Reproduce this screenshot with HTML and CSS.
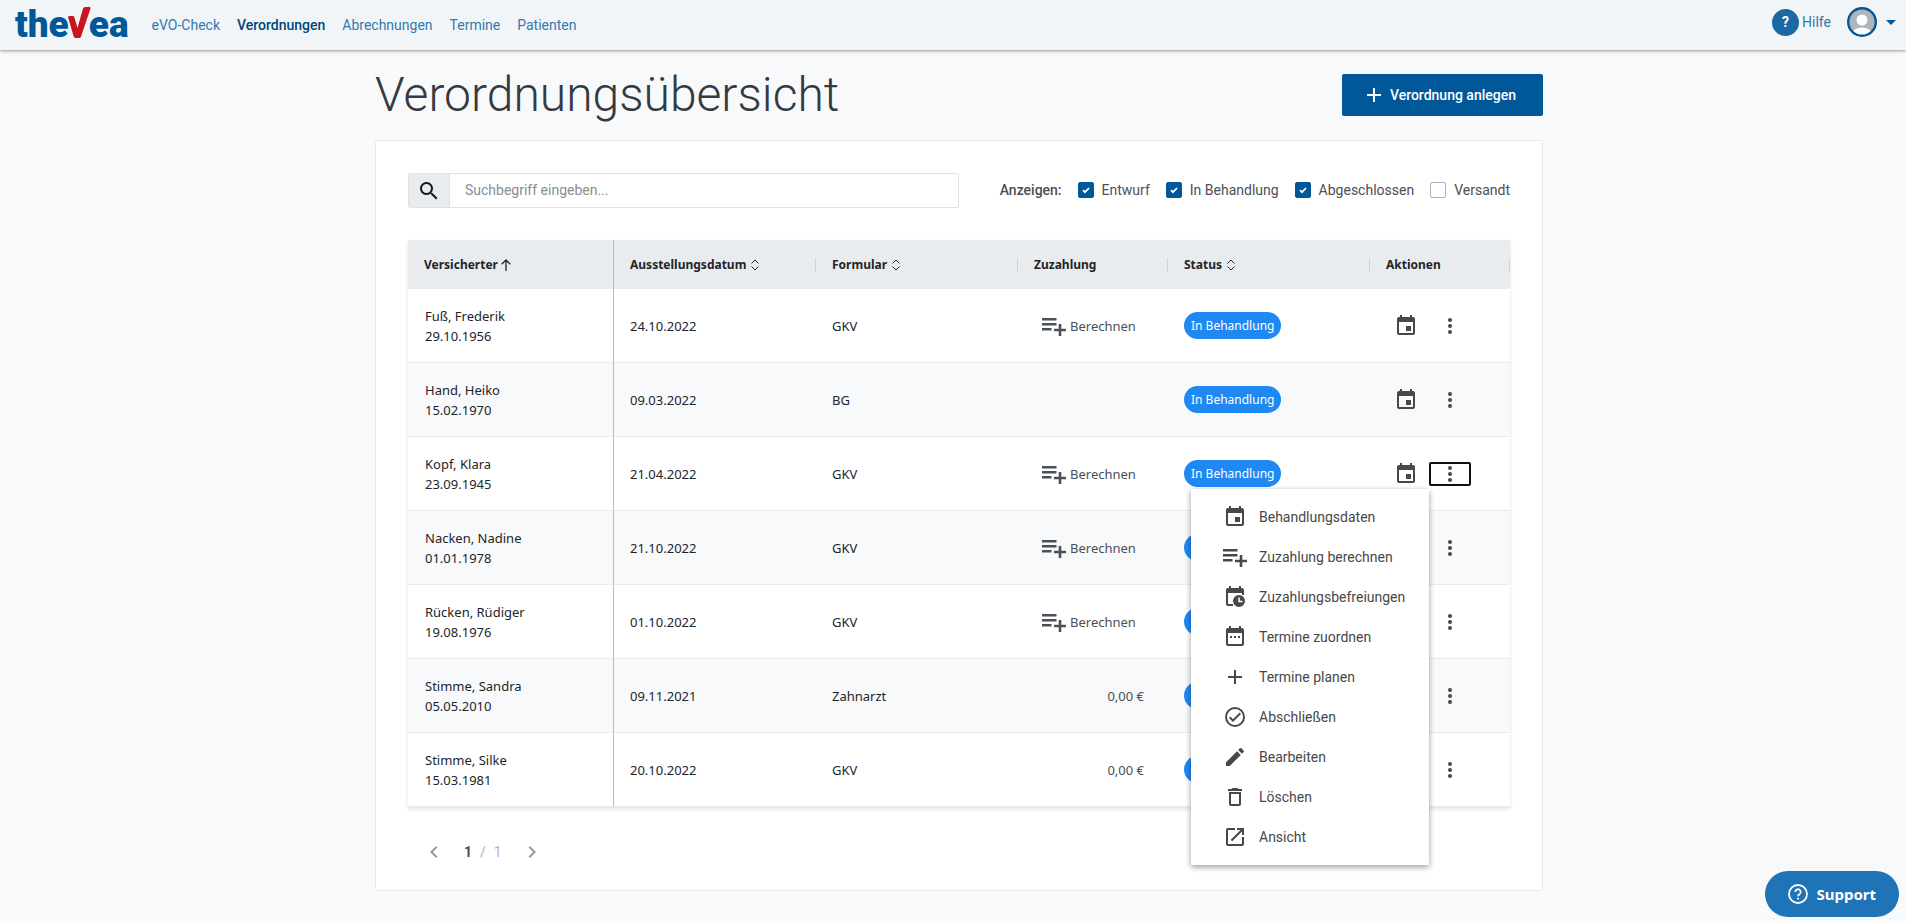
FILE: index.html
```html
<!DOCTYPE html>
<html lang="de">
<head>
    <meta charset="UTF-8">
    <meta name="viewport" content="width=device-width, initial-scale=1.0">
    <title>Verordnungsübersicht</title>
    <link rel="stylesheet" href="styles.css">
</head>
<body>
    <!-- shared icons -->
    <svg class="sprite" aria-hidden="true">
        <symbol id="i-event" viewBox="0 0 24 24"><path d="M17 12h-5v5h5v-5zM16 1v2H8V1H6v2H5c-1.1 0-2 .9-2 2v14c0 1.100.9 2 2 2h14c1.100 0 2-.9 2-2V5c0-1.100-.9-2-2-2h-1V1h-2zm3 18H5V8h14v11z"/></symbol>
        <symbol id="i-calc" viewBox="0 0 24 24"><path d="M0 4h14.500v2.500H0zM0 9h14.500v2.500H0zM0 14h9.500v2.500H0zM16.700 10h2.600v4.700H24v2.600h-4.700V22h-2.600v-4.700H12v-2.600h4.700z"/></symbol>
        <symbol id="i-clock" viewBox="0 0 24 24"><path d="M16 1v2H8V1H6v2H5c-1.100 0-2 .9-2 2v14c0 1.100.9 2 2 2h5v-2H5V8h14v2h2V5c0-1.100-.9-2-2-2h-1V1z"/><path fill-rule="evenodd" d="M16 10a6 6 0 1 0 0 12a6 6 0 0 0 0-12zM15.300 12.500h1.500v3.300h2.700v1.500h-4.200z"/></symbol>
        <symbol id="i-range" viewBox="0 0 24 24"><path d="M9 11H7v2h2v-2zm4 0h-2v2h2v-2zm4 0h-2v2h2v-2zm2-8h-1V1h-2v2H8V1H6v2H5c-1.100 0-2 .9-2 2v14c0 1.100.9 2 2 2h14c1.100 0 2-.9 2-2V5c0-1.100-.9-2-2-2zm0 16H5V8h14v11z"/></symbol>
        <symbol id="i-plus" viewBox="0 0 24 24"><path d="M19 13h-6v6h-2v-6H5v-2h6V5h2v6h6v2z"/></symbol>
        <symbol id="i-check" viewBox="0 0 24 24"><path d="M12 2a10 10 0 1 0 0 20a10 10 0 0 0 0-20zm0 18a8 8 0 1 1 0-16a8 8 0 0 1 0 16zm4.590-12.420L10 14.170l-2.590-2.580L6 13l4 4l8-8z"/></symbol>
        <symbol id="i-edit" viewBox="0 0 24 24"><path d="M3 17.250V21h3.750L17.810 9.940l-3.750-3.750L3 17.250zM20.710 7.040a1 1 0 0 0 0-1.410l-2.340-2.340a1 1 0 0 0-1.410 0l-1.830 1.830l3.750 3.750z"/></symbol>
        <symbol id="i-delete" viewBox="0 0 24 24"><path d="M6 19c0 1.100.9 2 2 2h8c1.100 0 2-.9 2-2V7H6v12zM8 9h8v10H8V9zm7.500-5l-1-1h-5l-1 1H5v2h14V4z"/></symbol>
        <symbol id="i-open" viewBox="0 0 24 24"><path d="M19 19H5V5h7V3H5a2 2 0 0 0-2 2v14a2 2 0 0 0 2 2h14c1.100 0 2-.9 2-2v-7h-2v7zM14 3v2h3.590l-9.830 9.830l1.410 1.410L19 6.410V10h2V3h-7z"/></symbol>
        <symbol id="i-more" viewBox="0 0 24 24"><circle cx="12" cy="6" r="2"/><circle cx="12" cy="12" r="2"/><circle cx="12" cy="18" r="2"/></symbol>
        <symbol id="i-search" viewBox="0 0 24 24"><path d="M15.500 14h-.79l-.28-.27A6.500 6.500 0 1 0 13.730 14.430l.27.28v.79l5 4.990L20.490 19l-4.990-5zm-6 0a4.500 4.500 0 1 1 0-9a4.500 4.500 0 0 1 0 9z"/></symbol>
        <symbol id="i-left" viewBox="0 0 24 24"><path d="M15.410 7.410L14 6l-6 6l6 6l1.410-1.410L10.830 12z"/></symbol>
        <symbol id="i-right" viewBox="0 0 24 24"><path d="M10 6L8.590 7.410L13.170 12l-4.580 4.590L10 18l6-6z"/></symbol>
        <symbol id="i-sort" viewBox="0 0 10 12"><path d="M1.500 4.500L5 1l3.500 3.500M1.500 7.500L5 11l3.500-3.500" fill="none" stroke="currentColor"/></symbol>
        <symbol id="i-up" viewBox="0 0 10 12"><path d="M5 12V1M.7 5.300L5 1l4.300 4.300" fill="none" stroke="currentColor" stroke-width="1.300"/></symbol>
    </svg>

    <header class="topbar">
        <a class="logo" href="#" aria-label="thevea"><span>the</span><svg class="logo-v" viewBox="0 0 23 31"><path d="M0 10q0-1 2-1h3q1 0 1.300 1L9.500 21L15 1.500Q15.500 0 17 0h4.500q1.500 0 1 1.500L13 29.500Q12.500 31 11 31H7.500Q6 31 5.500 29z" fill="#c9151b"/></svg><span>ea</span></a>
        <nav class="nav">
            <a href="#">eVO-Check</a>
            <a class="active" href="#">Verordnungen</a>
            <a href="#">Abrechnungen</a>
            <a href="#">Termine</a>
            <a href="#">Patienten</a>
        </nav>
        <div class="account">
            <a class="help" href="#"><span class="help-icon">?</span>Hilfe</a>
            <button class="profile" type="button" aria-label="Profil">
                <svg class="avatar" viewBox="0 0 30 30"><clipPath id="face"><circle cx="15" cy="15" r="13"/></clipPath><circle cx="15" cy="15" r="14" fill="#adb5bd"/><g clip-path="url(#face)" fill="#fff"><circle cx="15" cy="13" r="5.500"/><ellipse cx="15" cy="27" rx="10" ry="6.500"/></g><circle cx="15" cy="15" r="13.800" fill="none" stroke="#005898" stroke-width="2.400"/></svg>
                <svg class="caret" viewBox="0 0 10 5"><path d="M0 0h10L5 5z"/></svg>
            </button>
        </div>
    </header>

    <main class="page">
        <div class="page-head">
            <h1>Verordnungsübersicht</h1>
            <button class="create" type="button"><svg class="icon"><use href="#i-plus"/></svg>Verordnung anlegen</button>
        </div>

        <section class="card">
            <div class="toolbar">
                <div class="search">
                    <label for="search" aria-label="Suche"><svg class="icon"><use href="#i-search"/></svg></label>
                    <input type="text" id="search" placeholder="Suchbegriff eingeben...">
                </div>
                <div class="filters">
                    <span class="filters-title">Anzeigen:</span>
                    <label><input type="checkbox" checked>Entwurf</label>
                    <label><input type="checkbox" checked>In Behandlung</label>
                    <label><input type="checkbox" checked>Abgeschlossen</label>
                    <label><input type="checkbox">Versandt</label>
                </div>
            </div>

            <table class="list">
                <colgroup>
                    <col class="c-person"><col class="c-date"><col class="c-form"><col class="c-pay"><col class="c-status"><col class="c-actions">
                </colgroup>
                <thead>
                    <tr>
                        <th><div>Versicherter<svg class="sort"><use href="#i-up"/></svg></div></th>
                        <th><div>Ausstellungsdatum<svg class="sort"><use href="#i-sort"/></svg></div></th>
                        <th><div>Formular<svg class="sort"><use href="#i-sort"/></svg></div></th>
                        <th><div>Zuzahlung</div></th>
                        <th><div>Status<svg class="sort"><use href="#i-sort"/></svg></div></th>
                        <th><div>Aktionen</div></th>
                    </tr>
                </thead>
                <tbody>
                    <tr>
                        <td>Fuß, Frederik<br>29.10.1956</td>
                        <td>24.10.2022</td>
                        <td>GKV</td>
                        <td class="pay"><button class="calc" type="button"><svg class="icon"><use href="#i-calc"/></svg>Berechnen</button></td>
                        <td><span class="badge">In Behandlung</span></td>
                        <td><div class="actions"><button type="button" aria-label="Behandlungsdaten"><svg class="icon"><use href="#i-event"/></svg></button><button class="more" type="button" aria-label="Mehr"><svg class="icon"><use href="#i-more"/></svg></button></div></td>
                    </tr>
                    <tr>
                        <td>Hand, Heiko<br>15.02.1970</td>
                        <td>09.03.2022</td>
                        <td>BG</td>
                        <td class="pay"></td>
                        <td><span class="badge">In Behandlung</span></td>
                        <td><div class="actions"><button type="button" aria-label="Behandlungsdaten"><svg class="icon"><use href="#i-event"/></svg></button><button class="more" type="button" aria-label="Mehr"><svg class="icon"><use href="#i-more"/></svg></button></div></td>
                    </tr>
                    <tr>
                        <td>Kopf, Klara<br>23.09.1945</td>
                        <td>21.04.2022</td>
                        <td>GKV</td>
                        <td class="pay"><button class="calc" type="button"><svg class="icon"><use href="#i-calc"/></svg>Berechnen</button></td>
                        <td><span class="badge">In Behandlung</span></td>
                        <td>
                            <div class="actions">
                                <button type="button" aria-label="Behandlungsdaten"><svg class="icon"><use href="#i-event"/></svg></button>
                                <button class="more open" type="button" aria-label="Mehr"><svg class="icon"><use href="#i-more"/></svg></button>
                                <div class="menu">
                                    <button type="button"><svg class="icon"><use href="#i-event"/></svg>Behandlungsdaten</button>
                                    <button type="button"><svg class="icon"><use href="#i-calc"/></svg>Zuzahlung berechnen</button>
                                    <button type="button"><svg class="icon"><use href="#i-clock"/></svg>Zuzahlungsbefreiungen</button>
                                    <button type="button"><svg class="icon"><use href="#i-range"/></svg>Termine zuordnen</button>
                                    <button type="button"><svg class="icon"><use href="#i-plus"/></svg>Termine planen</button>
                                    <button type="button"><svg class="icon"><use href="#i-check"/></svg>Abschließen</button>
                                    <button type="button"><svg class="icon"><use href="#i-edit"/></svg>Bearbeiten</button>
                                    <button type="button"><svg class="icon"><use href="#i-delete"/></svg>Löschen</button>
                                    <button type="button"><svg class="icon"><use href="#i-open"/></svg>Ansicht</button>
                                </div>
                            </div>
                        </td>
                    </tr>
                    <tr>
                        <td>Nacken, Nadine<br>01.01.1978</td>
                        <td>21.10.2022</td>
                        <td>GKV</td>
                        <td class="pay"><button class="calc" type="button"><svg class="icon"><use href="#i-calc"/></svg>Berechnen</button></td>
                        <td><span class="badge">In Behandlung</span></td>
                        <td><div class="actions"><button type="button" aria-label="Behandlungsdaten"><svg class="icon"><use href="#i-event"/></svg></button><button class="more" type="button" aria-label="Mehr"><svg class="icon"><use href="#i-more"/></svg></button></div></td>
                    </tr>
                    <tr>
                        <td>Rücken, Rüdiger<br>19.08.1976</td>
                        <td>01.10.2022</td>
                        <td>GKV</td>
                        <td class="pay"><button class="calc" type="button"><svg class="icon"><use href="#i-calc"/></svg>Berechnen</button></td>
                        <td><span class="badge">In Behandlung</span></td>
                        <td><div class="actions"><button type="button" aria-label="Behandlungsdaten"><svg class="icon"><use href="#i-event"/></svg></button><button class="more" type="button" aria-label="Mehr"><svg class="icon"><use href="#i-more"/></svg></button></div></td>
                    </tr>
                    <tr>
                        <td>Stimme, Sandra<br>05.05.2010</td>
                        <td>09.11.2021</td>
                        <td>Zahnarzt</td>
                        <td class="pay">0,00 €</td>
                        <td><span class="badge">In Behandlung</span></td>
                        <td><div class="actions"><button type="button" aria-label="Behandlungsdaten"><svg class="icon"><use href="#i-event"/></svg></button><button class="more" type="button" aria-label="Mehr"><svg class="icon"><use href="#i-more"/></svg></button></div></td>
                    </tr>
                    <tr>
                        <td>Stimme, Silke<br>15.03.1981</td>
                        <td>20.10.2022</td>
                        <td>GKV</td>
                        <td class="pay">0,00 €</td>
                        <td><span class="badge">In Behandlung</span></td>
                        <td><div class="actions"><button type="button" aria-label="Behandlungsdaten"><svg class="icon"><use href="#i-event"/></svg></button><button class="more" type="button" aria-label="Mehr"><svg class="icon"><use href="#i-more"/></svg></button></div></td>
                    </tr>
                </tbody>
            </table>

            <div class="pager">
                <button type="button" aria-label="Zurück"><svg class="icon"><use href="#i-left"/></svg></button>
                <div class="pages"><b>1</b><span>/</span><span>1</span></div>
                <button type="button" aria-label="Weiter"><svg class="icon"><use href="#i-right"/></svg></button>
            </div>
        </section>
    </main>

    <button class="support" type="button">
        <svg viewBox="0 0 20 20" fill="none" stroke="currentColor" stroke-width="1.800"><circle cx="10" cy="10" r="9"/><path d="M7.300 8a2.700 2.700 0 1 1 4.300 2.100Q10 11 10 12.300"/><path d="M10 13.700v1.900"/></svg>
        Support
    </button>
</body>
</html>
```
FILE: styles.css
```css
* {
    box-sizing: border-box;
}
body {
    margin: 0;
    min-height: 100vh;
    background: #f8f9fb;
    color: #495057;
    font-family: Roboto, sans-serif;
    font-size: 14px;
}
button {
    border: none;
    background: none;
    padding: 0;
    color: inherit;
    font: inherit;
    cursor: pointer;
}
a {
    color: #3379ac;
    text-decoration: none;
}
.sprite {
    display: none;
}
.icon {
    width: 24px;
    height: 24px;
    flex: none;
    fill: currentColor;
}

/* top bar */
.topbar {
    display: flex;
    align-items: center;
    height: 50px;
    padding: 0 10px 0 15px;
    background: #f1f5f8;
    box-shadow: 0 1px 3px rgba(0, 0, 0, 0.4);
}
.logo {
    display: flex;
    align-items: center;
    color: #005898;
    font-size: 37px;
    font-weight: 900;
    line-height: 44px;
}
.logo-v {
    width: 23px;
    height: 31px;
    margin: 0 -2px 6px -1px;
}
.nav {
    display: flex;
    gap: 17px;
    margin-left: 23px;
}
.nav .active {
    color: #004578;
    font-weight: 500;
}
.account {
    display: flex;
    align-items: center;
    gap: 16px;
    margin-left: auto;
    padding-bottom: 6px;
}
.help {
    display: flex;
    align-items: center;
    gap: 3px;
}
.help-icon {
    width: 27px;
    height: 27px;
    border-radius: 50%;
    background: #1b68a3;
    color: #fff;
    font-weight: 700;
    line-height: 26px;
    text-align: center;
}
.profile {
    display: flex;
    align-items: center;
    gap: 9px;
}
.avatar {
    width: 30px;
    height: 30px;
}
.caret {
    width: 10px;
    height: 5px;
    fill: #005898;
}

/* page */
.page {
    max-width: 1180px;
    margin: 0 auto;
    padding: 17px 0 30px 12px;
}
.page-head {
    display: flex;
    align-items: center;
    justify-content: space-between;
    margin-bottom: 17px;
}
h1 {
    margin: 0;
    color: #343a40;
    font-size: 48px;
    font-weight: 300;
    line-height: 56px;
}
.create {
    display: flex;
    align-items: center;
    gap: 4px;
    height: 42px;
    padding: 0 27px 0 20px;
    border-radius: 2px;
    background: #005898;
    color: #fff;
    font-weight: 500;
}
.card {
    padding: 32px 32px 25px;
    border: 1px solid #e9ecef;
    border-radius: 2px;
    background: #fff;
}
.toolbar {
    display: flex;
    align-items: center;
    gap: 41px;
    margin-bottom: 32px;
}
.search {
    display: flex;
    flex: 1;
    height: 35px;
    border: 1px solid #dee2e6;
    border-radius: 2px;
}
.search label {
    display: flex;
    align-items: center;
    justify-content: center;
    width: 41px;
    border-right: 1px solid #dee2e6;
    background: #e9ecef;
    color: #16191c;
}
.search input {
    flex: 1;
    min-width: 0;
    padding: 0 15px 1px;
    border: none;
    outline: none;
    font: inherit;
}
.search input::placeholder {
    color: #868e96;
}
.filters {
    display: flex;
    align-items: center;
    gap: 16px;
    padding-bottom: 1px;
}
.filters-title {
    font-weight: 500;
}
.filters label {
    display: flex;
    align-items: center;
    gap: 8px;
}
.filters input {
    appearance: none;
    width: 16px;
    height: 16px;
    margin: 0;
    border: 1px solid #adb5bd;
    border-radius: 2px;
}
.filters input:checked {
    border-color: #005898;
    background: #005898 url("data:image/svg+xml,%3Csvg xmlns='http://www.w3.org/2000/svg' viewBox='0 0 8 8'%3E%3Cpath d='M1 4.200L3 6.200L7 2' fill='none' stroke='white' stroke-width='1.800'/%3E%3C/svg%3E") center / 8px 8px no-repeat;
}

/* table */
.list {
    width: 100%;
    table-layout: fixed;
    border-collapse: separate;
    border-spacing: 0;
    box-shadow: 0 2px 4px rgba(0, 0, 0, 0.12);
    color: #212529;
    font-family: "Noto Sans", sans-serif;
    font-size: 13px;
    line-height: 20px;
}
.c-person {
    width: 206px;
}
.c-date,
.c-form,
.c-status {
    width: 202px;
}
.c-pay {
    width: 150px;
}
.list th {
    height: 49px;
    padding: 0;
    background: #e9ecef;
    font-size: 12px;
    font-weight: 700;
    text-align: left;
}
.list th div {
    display: flex;
    align-items: center;
    gap: 4px;
    height: 14px;
    padding-left: 16px;
    border-right: 1px solid #ced4da;
}
.list th:first-child div {
    gap: 3px;
    border-right: none;
}
.list th:first-child,
.list td:first-child {
    border-right: 1px solid #b4b9c2;
}
.sort {
    width: 10px;
    height: 12px;
}
.list td {
    height: 74px;
    padding: 0 16px;
    border-bottom: 1px solid #e9ecef;
}
.list td:first-child {
    padding-left: 17px;
}
.list tr:nth-child(even) td {
    background: #f8f9fb;
}
.list .pay {
    padding-right: 24px;
    color: #495057;
    text-align: right;
}
.calc {
    display: flex;
    align-items: center;
    gap: 4px;
    margin-left: 8px;
}
.badge {
    display: inline-block;
    padding: 0 7px;
    border-radius: 14px;
    background: #2088f2;
    color: #fff;
    font-size: 12px;
    line-height: 27px;
}
.actions {
    display: flex;
    align-items: center;
    gap: 11px;
    margin-left: 8px;
    position: relative;
}
.actions button {
    display: flex;
    align-items: center;
    color: #484848;
}
.actions .more {
    justify-content: center;
    width: 42px;
    height: 24px;
    border-radius: 2px;
}
.more.open {
    outline: 2px solid #101010;
    outline-offset: -2px;
}
.menu {
    position: absolute;
    z-index: 1;
    top: 27px;
    right: 65px;
    width: 238px;
    padding: 8px 0;
    background: #fff;
    box-shadow: 0 2px 6px rgba(0, 0, 0, 0.4);
}
.menu button {
    gap: 12px;
    width: 100%;
    height: 40px;
    padding: 0 32px;
    font-family: Roboto, sans-serif;
    font-size: 14px;
}

/* pager */
.pager {
    display: flex;
    align-items: center;
    gap: 18px;
    height: 26px;
    margin-top: 32px;
    padding-left: 14px;
    color: #adb5bd;
}
.pager button {
    display: flex;
    color: #999;
}
.pages {
    display: flex;
    gap: 8px;
}
.pages b {
    color: #495057;
}

.support {
    display: flex;
    align-items: center;
    gap: 8px;
    position: fixed;
    right: 7px;
    bottom: 4px;
    height: 46px;
    padding: 0 23px;
    border-radius: 23px;
    background: #1f73b7;
    color: #fff;
    font-family: "Noto Sans", sans-serif;
    font-size: 15px;
    font-weight: 700;
}
.support svg {
    width: 20px;
    height: 20px;
}
```
